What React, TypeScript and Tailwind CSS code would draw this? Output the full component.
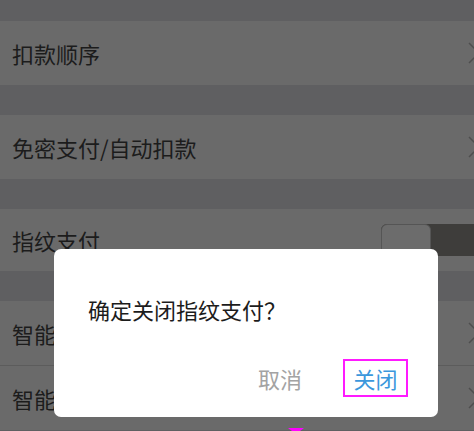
const font = "font-['Noto_Sans_CJK_SC','Noto_Sans',sans-serif]"

function Chevron() {
  return (
    <svg width="12" height="22" viewBox="0 0 12 22" className="ml-auto mr-[-6px] shrink-0">
      <polyline points="1,1 11,11 1,21" fill="none" stroke="#4e4e4e" strokeWidth="1.5" />
    </svg>
  )
}

function Row({ label, children }: { label: string; children?: React.ReactNode }) {
  return (
    <div className="flex h-[64px] items-center bg-[#6a6a6a] pl-[12px] text-[22px] leading-none text-[#1c1c1c]">
      <span>{label}</span>
      {children ?? <Chevron />}
    </div>
  )
}

function Gap({ h }: { h: string }) {
  return <div className={`${h} bg-[#5f5f61]`} />
}

export default function App() {
  return (
    <div className={`relative h-[431px] w-[474px] overflow-hidden bg-[#5f5f61] ${font}`}>
      <Gap h="h-[21px]" />
      <Row label="扣款顺序" />
      <Gap h="h-[30px]" />
      <Row label="免密支付/自动扣款" />
      <Gap h="h-[30px]" />
      <div className="flex h-[62px] items-center bg-[#6a6a6a] pl-[12px] text-[22px] leading-none text-[#1c1c1c]">
        <span>指纹支付</span>
        <div className="ml-auto mr-[-30px] flex h-[32px] w-[123px] shrink-0 overflow-hidden rounded-[6px] bg-[#3e3d3b]">
          <div className="h-full w-[50px] rounded-[6px] border border-[#555555] bg-[#6c6c6c]" />
        </div>
      </div>
      <Gap h="h-[30px]" />
      <div className="border-b border-[#5c5c5c]">
        <Row label="智能扣款" />
      </div>
      <Row label="智能提醒" />

      <div className="absolute left-[54px] top-[249px] flex h-[168px] w-[384px] flex-col rounded-[7px] bg-white pr-[30px]">
        <div className="pl-[34px] pt-[48px] text-[22px] leading-[24px] text-[#1c1c1c]">确定关闭指纹支付？</div>
        <div className="mt-[38px] flex items-center justify-end gap-[41px]">
          <span className="text-[22px] leading-[24px] text-[#a3a3a3]">取消</span>
          <span className="flex h-[38px] w-[65px] items-center justify-center border-2 border-[#ff1aff] text-[22px] leading-[24px] text-[#3b97dc]">
            关闭
          </span>
        </div>
      </div>

      <div className="absolute left-[288px] top-[428px] h-0 w-0 border-l-[8px] border-r-[8px] border-t-[6px] border-l-transparent border-r-transparent border-t-[#ff00ff]" />
    </div>
  )
}
